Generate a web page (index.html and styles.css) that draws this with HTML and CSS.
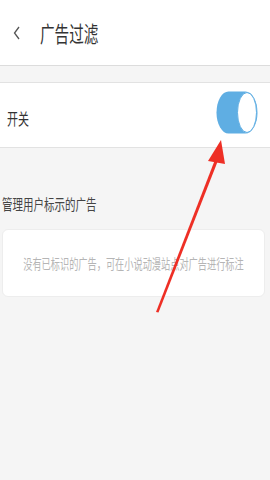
FILE: index.html
```html
<!DOCTYPE html>
<html lang="zh">
<head>
    <meta charset="UTF-8">
    <meta name="viewport" content="width=device-width, initial-scale=1.0">
    <title>广告过滤</title>
    <link rel="stylesheet" href="styles.css">
</head>
<body>

    <!-- 顶部标题栏 -->
    <div class="topbar">
        <svg class="back" width="8" height="14" viewBox="0 0 8 14">
            <polyline points="6,1 1.5,7 6,13" fill="none" stroke="#555" stroke-width="1.3"/>
        </svg>
        <span class="title tall">广告过滤</span>
    </div>

    <!-- 开关 -->
    <div class="row">
        <span class="row-label tall">开关</span>
        <svg class="toggle" width="42" height="43" viewBox="0 0 42 43">
            <rect x="0.5" y="0.5" width="41" height="42" rx="12" ry="21" fill="#5faee3"/>
            <ellipse cx="31" cy="21.5" rx="9.5" ry="20" fill="#fff" stroke="#5faee3" stroke-width="1"/>
        </svg>
    </div>

    <div class="section-title tall">管理用户标示的广告</div>

    <div class="card">
        <span class="card-text tall">没有已标识的广告，可在小说动漫站点对广告进行标注</span>
    </div>

    <!-- 红色箭头 -->
    <svg class="arrow" width="270" height="480" viewBox="0 0 270 480">
        <polygon points="156,312 158.5,312.5 219,158 216,157" fill="#ee2f25"/>
        <polygon points="221,140 208,161 225,164" fill="#ee2f25"/>
    </svg>

</body>
</html>
```

FILE: styles.css
```css
body {
    margin: 0;
    width: 270px;
    height: 480px;
    background: #f5f5f5;
    font-family: "Noto Sans CJK SC", "Noto Sans", sans-serif;
    color: #333;
    position: relative;
    overflow: hidden;
}

/* 文字在截图中被纵向拉伸 */
.tall {
    display: inline-block;
    transform: scaleY(1.45);
}

/* 标题栏 */
.topbar {
    height: 66px;
    background: #fff;
    border-bottom: 1px solid #dcdcdc;
    display: flex;
    align-items: center;
    padding-left: 13px;
    box-sizing: border-box;
}

.back {
    margin-top: 1px;
}

.title {
    margin-left: 19px;
    font-size: 14.6px;
    color: #333;
}

/* 开关行 */
.row {
    margin-top: 16px;
    height: 66px;
    background: #fff;
    border-top: 1px solid #e2e2e2;
    border-bottom: 1px solid #e2e2e2;
    box-sizing: border-box;
    display: flex;
    align-items: center;
    justify-content: space-between;
    padding: 0 12px 0 7px;
}

.row-label {
    font-size: 11px;
    color: #333;
    margin-top: 5px;
}

.toggle {
    margin-top: -6px;
}

/* 分组标题 */
.section-title {
    margin: 48px 0 0 2px;
    font-size: 10.5px;
    color: #444;
}

/* 空状态卡片 */
.card {
    margin: 16px 5px 0 2px;
    height: 68px;
    background: #fff;
    border: 1px solid #ededed;
    border-radius: 6px;
    box-sizing: border-box;
    display: flex;
    align-items: center;
    justify-content: center;
}

.card-text {
    font-size: 9.2px;
    color: #b5b5b5;
    white-space: nowrap;
}

.arrow {
    position: absolute;
    top: 0;
    left: 0;
    pointer-events: none;
}
```
